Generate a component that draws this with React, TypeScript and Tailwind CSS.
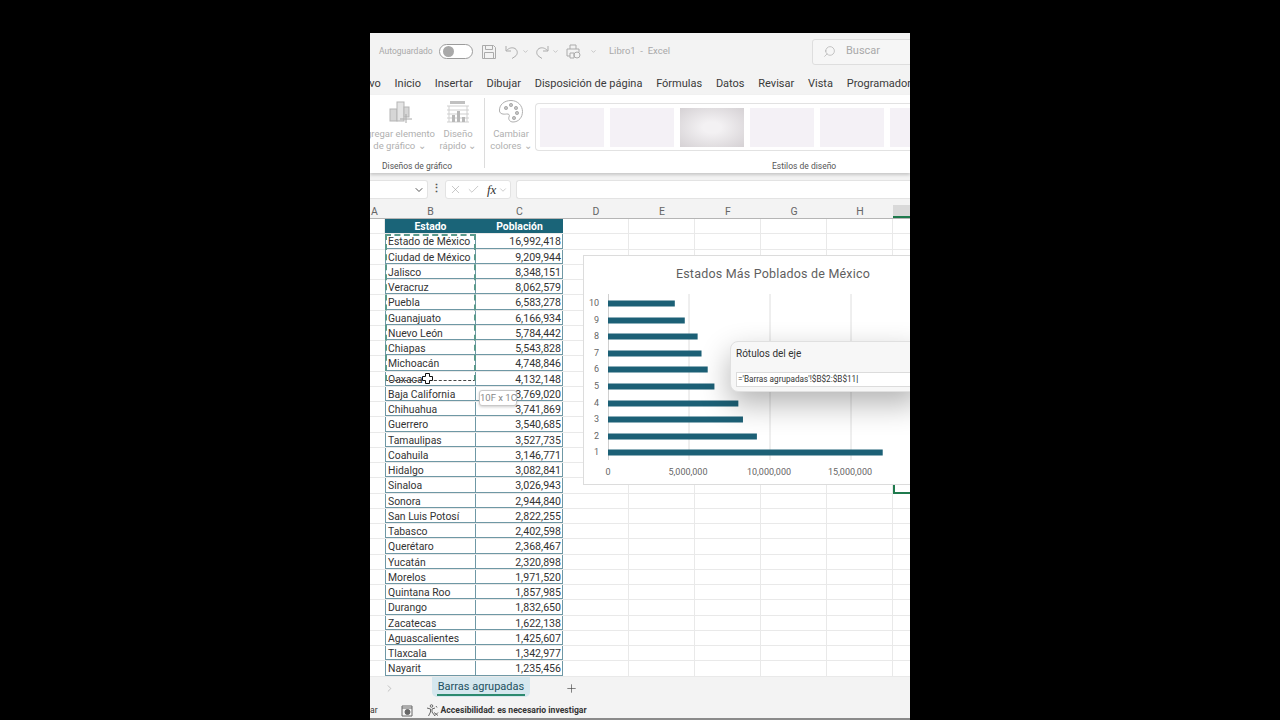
import { ChevronDown, ChevronRight, Check, Plus, Search, X } from 'lucide-react';

const estados: [string, number][] = [
  ['Estado de México', 16992418],
  ['Ciudad de México', 9209944],
  ['Jalisco', 8348151],
  ['Veracruz', 8062579],
  ['Puebla', 6583278],
  ['Guanajuato', 6166934],
  ['Nuevo León', 5784442],
  ['Chiapas', 5543828],
  ['Michoacán', 4748846],
  ['Oaxaca', 4132148],
  ['Baja California', 3769020],
  ['Chihuahua', 3741869],
  ['Guerrero', 3540685],
  ['Tamaulipas', 3527735],
  ['Coahuila', 3146771],
  ['Hidalgo', 3082841],
  ['Sinaloa', 3026943],
  ['Sonora', 2944840],
  ['San Luis Potosí', 2822255],
  ['Tabasco', 2402598],
  ['Querétaro', 2368467],
  ['Yucatán', 2320898],
  ['Morelos', 1971520],
  ['Quintana Roo', 1857985],
  ['Durango', 1832650],
  ['Zacatecas', 1622138],
  ['Aguascalientes', 1425607],
  ['Tlaxcala', 1342977],
  ['Nayarit', 1235456],
];

const tabs = ['Inicio', 'Insertar', 'Dibujar', 'Disposición de página', 'Fórmulas', 'Datos', 'Revisar', 'Vista', 'Programador'];
const barValues = [16992418, 9209944, 8348151, 8062579, 6583278, 6166934, 5784442, 5543828, 4748846, 4132148];
const barY = [196, 180, 163, 147, 130, 113, 97, 80, 64, 47];
const scale = 242.5 / 15000000;
const font = "font-['Roboto',sans-serif]";

const EmptyCols = () => (
  <>
    <div className="w-[66px] border-r border-[#e9e9e9]" />
    <div className="w-[66px] border-r border-[#e9e9e9]" />
    <div className="w-[66px] border-r border-[#e9e9e9]" />
    <div className="w-[66px] border-r border-[#e9e9e9]" />
    <div className="w-[66px] border-r border-[#e9e9e9]" />
    <div className="flex-1" />
  </>
);

const Chart = () => (
  <div className="absolute left-[213px] top-[36px] w-[340px] h-[230px] bg-white border border-[#dcdcdc]">
    <svg width="340" height="229" className={font}>
      <text x="189" y="22" textAnchor="middle" fontSize="12.5" fill="#5f5f5f" letterSpacing="0.2">Estados Más Poblados de México</text>
      {[105, 186, 267].map((x) => (
        <line key={x} x1={x} x2={x} y1="38" y2="204" stroke="#dedede" />
      ))}
      <line x1="24.5" x2="24.5" y1="38" y2="204" stroke="#d0d0d0" />
      {barValues.map((v, i) => (
        <g key={i}>
          <rect x="24" y={barY[i] - 2.5} width={v * scale} height="6" fill="#1c6076" />
          <text x="15" y={barY[i] + 3} textAnchor="end" fontSize="9" fill="#666">{i + 1}</text>
        </g>
      ))}
      <text x="24" y="219" textAnchor="middle" fontSize="9" fill="#666">0</text>
      <text x="104" y="219" textAnchor="middle" fontSize="9" fill="#666">5,000,000</text>
      <text x="185" y="219" textAnchor="middle" fontSize="9" fill="#666">10,000,000</text>
      <text x="266" y="219" textAnchor="middle" fontSize="9" fill="#666">15,000,000</text>
    </svg>
  </div>
);

export default function App() {
  return (
    <div className={`w-[1280px] h-[720px] bg-black flex justify-center overflow-hidden ${font}`}>
      <div className="w-[540px] h-[687px] mt-[33px] flex flex-col bg-[#f3f3f3] overflow-hidden">
        {/* title bar */}
        <div className="h-[37px] shrink-0 flex items-center text-[8.5px] text-[#a9a9a9] pl-[9px] whitespace-nowrap">
          <span className="w-[54px] shrink-0">Autoguardado</span>
          <div className="ml-[6px] w-[34px] h-[15px] shrink-0 rounded-full bg-white border border-[#9c9c9c] flex items-center pl-[3px]">
            <div className="w-[11px] h-[11px] rounded-full bg-[#a9a9a9]" />
          </div>
          <svg width="14" height="14" viewBox="0 0 14 14" fill="none" stroke="#ababab" className="ml-[9px] shrink-0">
            <path d="M.5.5h11l2 2v11H.5zM3.5.5v4h7v-4M2.5 13.5v-6h9v6" />
          </svg>
          <svg width="14" height="14" viewBox="0 0 14 14" fill="none" stroke="#ababab" className="ml-[9px] shrink-0">
            <path d="M1 1v5h5M1.5 5.5C4 3 7 2 10 3.5c3 2 3 6 0 8l-3 2" />
          </svg>
          <ChevronDown size={7} className="ml-[3px] shrink-0" />
          <svg width="14" height="14" viewBox="0 0 14 14" fill="none" stroke="#ababab" className="ml-[6px] shrink-0">
            <path d="M13 1v5H8M12.5 5.5C10 3 7 2 4 3.5c-3 2-3 6 0 8l3 2" />
          </svg>
          <ChevronDown size={7} className="ml-[3px] shrink-0" />
          <svg width="15" height="15" viewBox="0 0 15 15" fill="none" stroke="#ababab" className="ml-[7px] shrink-0">
            <path d="M4 5V1h6v4M4 12H1V5h12v3M4 9h4v5H4z" />
            <circle cx="11" cy="11" r="3" />
          </svg>
          <ChevronDown size={7} className="ml-[9px] shrink-0" />
          <span className="ml-[12px] w-[203px] shrink-0 text-[9.5px]">Libro1&nbsp; -&nbsp; Excel</span>
          <div className="w-[110px] h-[26px] shrink-0 rounded-[3px] bg-[#f6f6f6] border border-[#dedede] flex items-center pl-[10px] gap-[10px] text-[11px]">
            <Search size={13} strokeWidth={1.2} className="-scale-x-100" />
            <span>Buscar</span>
          </div>
        </div>
        {/* tabs */}
        <div className="h-[25px] shrink-0 flex items-start gap-[13.75px] -ml-[26px] text-[11px] text-[#3a3a3a] whitespace-nowrap pt-[6px]">
          <span>Archivo</span>
          {tabs.map((t) => (
            <span key={t}>{t}</span>
          ))}
        </div>
        {/* ribbon */}
        <div className="h-[78px] shrink-0 bg-white shadow-[0_2px_3px_rgba(0,0,0,0.18)] flex text-[#b0b0b0] text-[9.5px] leading-[12.5px] relative">
          <div className="w-[115px] shrink-0 flex flex-col border-r border-[#dcdcdc] mt-[3px] mb-[5px]">
            <div className="flex-1 flex">
              <div className="w-[65px] -ml-[3px] flex flex-col items-center whitespace-nowrap">
                <svg width="26" height="24" viewBox="0 0 26 24" fill="none" className="mt-[2px]">
                  <rect x="3" y="9" width="7" height="12" fill="#d6d6d6" stroke="#b5b5b5" />
                  <rect x="10" y="2" width="7" height="19" fill="#e4e4e4" stroke="#b5b5b5" />
                  <rect x="17" y="7" width="5" height="10" fill="#d6d6d6" stroke="#b5b5b5" />
                  <path d="M19 14v9M13 19h12" stroke="#a8a8a8" />
                </svg>
                <span className="mt-[3.5px] pl-[2px]">gregar elemento</span>
                <span>de gráfico ⌄</span>
              </div>
              <div className="ml-[9px] w-[34px] flex flex-col items-center whitespace-nowrap">
                <svg width="24" height="24" viewBox="0 0 24 24" fill="none" className="mt-[2px]">
                  <rect x="4" y="1" width="15" height="3" fill="#c0c0c0" />
                  <path d="M1 6h22M1 10h22M1 14h22M1 18h22M1 22h22M3 6v16M21 6v16" stroke="#cfcfcf" />
                  <rect x="6" y="15" width="3" height="7" fill="#b8b8b8" />
                  <rect x="11" y="11" width="3" height="11" fill="#b8b8b8" />
                  <rect x="16" y="17" width="3" height="5" fill="#b8b8b8" />
                </svg>
                <span className="mt-[3.5px]">Diseño</span>
                <span>rápido ⌄</span>
              </div>
            </div>
            <span className="text-[8.5px] text-[#555] pl-[12px] -mb-[4px] whitespace-nowrap">Diseños de gráfico</span>
          </div>
          <div className="flex-1 flex flex-col mt-[3px] mb-[1px]">
            <div className="flex-1 flex">
              <div className="w-[50px] shrink-0 pl-[2px] flex flex-col items-center">
                <svg width="26" height="25" viewBox="0 0 26 25" fill="none" stroke="#b0b0b0" className="mt-[1px]">
                  <path d="M13 1.5C6 1.5 1 6 1.5 12c.3 3 4 3.5 7 3 2.5-.3 3.5 1 2.5 3-1 2.5 1 5 4 5 6 0 9.5-5 9.5-10.5S20 1.5 13 1.5z" />
                  <circle cx="8" cy="9" r="1.6" fill="#c4c4c4" />
                  <circle cx="13" cy="6" r="1.6" fill="#c4c4c4" />
                  <circle cx="18" cy="9" r="1.6" fill="#c4c4c4" />
                  <circle cx="19" cy="14" r="1.6" fill="#c4c4c4" />
                  <circle cx="16" cy="19" r="1.6" fill="#c4c4c4" />
                </svg>
                <span className="mt-[3.5px]">Cambiar</span>
                <span>colores ⌄</span>
              </div>
              <div className="flex-1 mt-[5px] h-[48px] rounded-l-[4px] border border-r-0 border-[#e2e2e2] flex gap-[6px] p-[4px] overflow-hidden">
                <div className="w-[64px] shrink-0 h-[39px] bg-[#f4f1f6]" />
                <div className="w-[64px] shrink-0 h-[39px] bg-[#f4f1f6]" />
                <div className="w-[64px] shrink-0 h-[39px] bg-[radial-gradient(ellipse_at_center,#f3f1f3_20%,#d5d1d4_100%)]" />
                <div className="w-[64px] shrink-0 h-[39px] bg-[#f4f1f6]" />
                <div className="w-[64px] shrink-0 h-[39px] bg-[#f4f1f6]" />
                <div className="w-[64px] shrink-0 h-[39px] bg-[#f4f1f6]" />
              </div>
            </div>
            <span className="text-[8.5px] text-[#555] pl-[287px] whitespace-nowrap">Estilos de diseño</span>
          </div>
        </div>
        {/* formula bar */}
        <div className="h-[19px] mt-[7px] shrink-0 flex items-stretch text-[#9a9a9a]">
          <div className="w-[58px] bg-white rounded-r-[3px] border border-l-0 border-[#e3e3e3] flex items-center justify-end pr-[2px]">
            <ChevronDown size={12} className="text-[#555]" />
          </div>
          <div className="w-[17px] flex items-center justify-center text-[#555] font-bold text-[11px]">⋮</div>
          <div className="w-[66px] bg-white rounded-[3px] border border-[#e3e3e3] flex items-center pl-[3px] gap-[2px]">
            <X size={13} strokeWidth={1} />
            <Check size={13} strokeWidth={1} className="ml-[3px]" />
            <span className="ml-[5px] italic font-['Liberation_Serif',serif] text-[13px] text-[#333]">fx</span>
            <ChevronDown size={10} strokeWidth={1.2} />
          </div>
          <div className="flex-1 ml-[5px] bg-white rounded-l-[3px] border border-r-0 border-[#e3e3e3]" />
        </div>
        {/* column letters */}
        <div className="h-[14px] mt-[6px] shrink-0 flex text-[10.5px] text-[#666] leading-[13px] text-center border-b border-[#b5b5b5]">
          <div className="w-[15px] pr-[6px]">A</div>
          <div className="w-[91px]">B</div>
          <div className="w-[87px]">C</div>
          <div className="w-[66px]">D</div>
          <div className="w-[66px]">E</div>
          <div className="w-[66px]">F</div>
          <div className="w-[66px]">G</div>
          <div className="w-[66px]">H</div>
          <div className="flex-1 bg-[#d9d9d9] border-b-2 border-[#1f7a4d]" />
        </div>
        {/* sheet */}
        <div className="flex-1 bg-white relative overflow-hidden text-[10.4px] text-[#333] leading-[16.5px]">
          <div className="h-[15.25px] flex border-b border-[#e9e9e9]">
            <div className="w-[15px] border-r border-[#e9e9e9]" />
            <div className="w-[91px] bg-[#1a6478] text-white font-bold text-center">Estado</div>
            <div className="w-[87px] bg-[#1a6478] text-white font-bold text-center">Población</div>
            <EmptyCols />
          </div>
          {estados.map(([name, value]) => (
            <div key={name} className="h-[15.25px] flex border-b border-[#e9e9e9]">
              <div className="w-[15px]" />
              <div className="w-[91px] pl-[2px] border border-t-0 border-[#6f98a5] whitespace-nowrap">{name}</div>
              <div className="w-[87px] px-[1px] text-right text-[10.6px] border-b border-r border-[#6f98a5]">{value.toLocaleString('en-US')}</div>
              <EmptyCols />
            </div>
          ))}
          {/* copy selection */}
          <div className="absolute left-[15px] top-[15px] w-[91px] h-[147px] border-2 border-b border-dashed border-[#5b9a8c] border-b-[#444] pointer-events-none" />
          <svg width="11" height="11" viewBox="0 0 11 11" className="absolute left-[52px] top-[154px]">
            <path d="M3.5.5h4v3h3v4h-3v3h-4v-3h-3v-4h3z" fill="#fff" stroke="#111" />
          </svg>
          <div className="absolute left-[109px] top-[171px] w-[38px] h-[16px] bg-white border border-[#c8c8c8] rounded-[3px] text-[9.5px] text-[#888] text-center leading-[14px] shadow-[0_1px_3px_rgba(0,0,0,0.2)] whitespace-nowrap">10F x 1C</div>
          {/* active cell corner */}
          <div className="absolute left-[523px] top-[264px] w-[20px] h-[11px] border-l-2 border-b-2 border-[#1f7a4d]" />
          <Chart />
          {/* axis label range dialog */}
          <div className="absolute left-[360px] top-[122px] w-[190px] h-[51px] bg-[#f7f7f7] rounded-l-[8px] border border-[#e0e0e0] shadow-[0_12px_30px_rgba(0,0,0,0.3)] pl-[5px] pt-[4px] text-[10px] text-[#333] leading-[15px]">
            <div>Rótulos del eje</div>
            <div className="mt-[11px] h-[15px] bg-white border border-[#dcdcdc] pl-[1px] text-[8.2px] leading-[13px] whitespace-nowrap">='Barras agrupadas'!$B$2:$B$11<span className="text-black">|</span></div>
          </div>
        </div>
        {/* sheet tabs */}
        <div className="h-[23px] shrink-0 flex items-start text-[#444]">
          <ChevronRight size={11} strokeWidth={1.2} className="ml-[14px] mt-[6px] text-[#999]" />
          <div className="ml-[37px] w-[98px] h-[20px] rounded-b-[5px] bg-[#d5e7ee] flex flex-col items-center text-[11px] leading-[20px] text-[#22505e]">
            <span className="h-[17px]">Barras agrupadas</span>
            <div className="w-[88px] h-[2px] bg-[#2c8a6f]" />
          </div>
          <Plus size={13} strokeWidth={1.2} className="ml-[35px] mt-[5px]" />
        </div>
        {/* status bar */}
        <div className="h-[20px] shrink-0 flex items-center text-[8.6px] text-[#333] pt-[3px] border-b-2 border-[#8a8a8a]">
          <span>ar</span>
          <svg width="12" height="12" viewBox="0 0 12 12" fill="none" stroke="#666" className="ml-[23px]">
            <path d="M1 3V1h10v10H1V3h10" />
            <circle cx="6.5" cy="7" r="2.5" fill="#666" />
          </svg>
          <svg width="13" height="13" viewBox="0 0 13 13" fill="none" stroke="#666" className="ml-[13px]">
            <circle cx="5.5" cy="2" r="1.3" />
            <path d="M1 4l3.5 1v3L2.5 12M9 4l-3 1v3l3 4M8 8.5l4 3M12 8.5l-3 3M10 2l1 1.5" />
          </svg>
          <span className="ml-[2px] font-bold">Accesibilidad: es necesario investigar</span>
        </div>
      </div>
    </div>
  );
}
